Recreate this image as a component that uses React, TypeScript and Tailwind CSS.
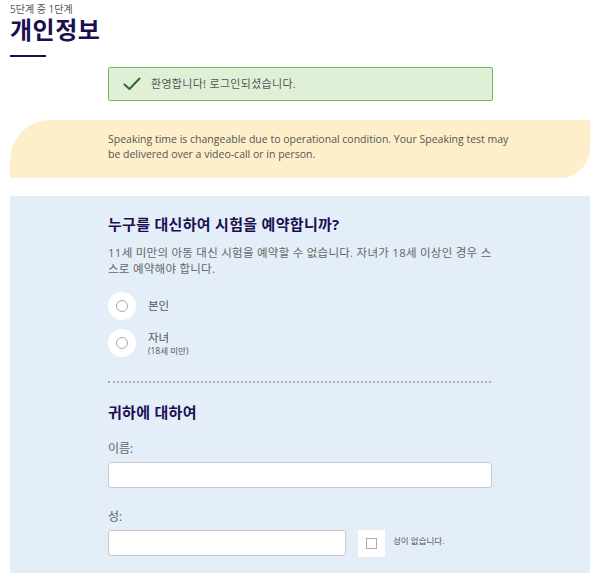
export default function App() {
  return (
    <div className="w-[600px] min-h-[573px] bg-white font-['Open_Sans','Noto_Sans_CJK_KR',sans-serif] text-[#555]">
      {/* Header */}
      <div className="px-[10px] pt-[3px]">
        <p className="text-[10px] leading-[12px] text-[#555]">5단계 중 1단계</p>
        <h1 className="mt-[2px] text-[24px] leading-[26px] font-bold text-[#1b0e52] tracking-[0.5px]">개인정보</h1>
        <div className="mt-[12px] h-[2px] w-[36px] bg-[#1b0e52]" />
      </div>

      {/* Success alert */}
      <div className="ml-[108px] mt-[10px] flex h-[34px] w-[385px] items-center rounded-[2px] border border-[#6fb761] bg-[#dff0d7] pl-[14px]">
        <svg width="18" height="14" viewBox="0 0 18 14" fill="none" className="mr-[10px]">
          <path d="M1.5 7.5 L6.5 12 L16.5 1.5" stroke="#2e6b2b" strokeWidth="2" strokeLinecap="round" strokeLinejoin="round" />
        </svg>
        <span className="text-[11px] tracking-[0.3px] text-[#555]">환영합니다! 로그인되셨습니다.</span>
      </div>

      {/* Notice */}
      <div className="mx-[10px] mt-[19px] h-[58px] rounded-tl-[40px] rounded-br-[30px] bg-[#fdefc9] pl-[98px] pr-[80px] pt-[12px]">
        <p className="text-[10.5px] leading-[15px] text-[#555]">
          Speaking time is changeable due to operational condition. Your Speaking test may be delivered over a video-call or in person.
        </p>
      </div>

      {/* Form panel */}
      <div className="mx-[10px] mt-[18px] min-h-[377px] bg-[#e3eef8] pl-[98px] pr-[99px] pt-[16px]">
        <h2 className="text-[15px] leading-[24px] font-bold tracking-[0.3px] text-[#1b0e52]">누구를 대신하여 시험을 예약합니까?</h2>
        <p className="mt-[9px] w-[394px] break-all text-[11.5px] leading-[16px] tracking-[0.25px] text-[#666]">
          11세 미만의 아동 대신 시험을 예약할 수 없습니다. 자녀가 18세 이상인 경우 스스로 예약해야 합니다.
        </p>

        <div className="mt-[15px] flex items-center">
          <div className="flex h-[28px] w-[28px] items-center justify-center rounded-full bg-white">
            <div className="h-[12px] w-[12px] rounded-full border border-[#aaa]" />
          </div>
          <span className="ml-[12px] text-[11.5px] text-[#555]">본인</span>
        </div>

        <div className="mt-[9px] flex items-center">
          <div className="flex h-[28px] w-[28px] items-center justify-center rounded-full bg-white">
            <div className="h-[12px] w-[12px] rounded-full border border-[#aaa]" />
          </div>
          <div className="ml-[12px] flex flex-col">
            <span className="text-[11.5px] leading-[14px] text-[#555]">자녀</span>
            <span className="text-[8.5px] leading-[11px] text-[#555]">(18세 미만)</span>
          </div>
        </div>

        <div className="mt-[24px] border-t-2 border-dotted border-[#a9adb3]" />

        <h2 className="mt-[17px] text-[15px] leading-[24px] font-bold tracking-[0.3px] text-[#1b0e52]">귀하에 대하여</h2>

        <label className="mt-[17px] block text-[12px] leading-[16px] text-[#666]">이름:</label>
        <div className="mt-[5px] h-[26px] w-[384px] rounded-[3px] border border-[#c7c9cc] bg-white" />

        <label className="mt-[21px] block text-[12px] leading-[16px] text-[#666]">성:</label>
        <div className="mt-[5px] flex items-start">
          <div className="h-[26px] w-[238px] rounded-[3px] border border-[#c7c9cc] bg-white" />
          <div className="ml-[12px] flex h-[27px] w-[27px] items-center justify-center bg-white">
            <div className="h-[11px] w-[11px] border border-[#aaa]" />
          </div>
          <span className="ml-[8px] mt-[5px] text-[8.5px] text-[#555]">성이 없습니다.</span>
        </div>
      </div>
    </div>
  );
}
